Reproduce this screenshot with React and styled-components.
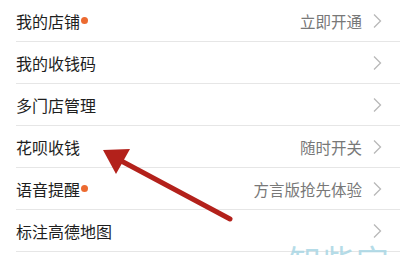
import React from "react";
import styled, { createGlobalStyle } from "styled-components";

const GlobalStyle = createGlobalStyle`
  html, body {
    margin: 0;
    padding: 0;
    background: #fff;
  }
  body {
    font-family: "Noto Sans CJK SC", "Noto Sans", sans-serif;
  }
`;

const ROWS = [
  { label: "我的店铺", dot: true, hint: "立即开通" },
  { label: "我的收钱码" },
  { label: "多门店管理" },
  { label: "花呗收钱", hint: "随时开关" },
  { label: "语音提醒", dot: true, hint: "方言版抢先体验" },
  { label: "标注高德地图" },
];

function Chevron() {
  return (
    <ChevronSvg viewBox="0 0 10 16" width="10" height="16">
      <path d="M2 1.5 L8.5 8 L2 14.5" fill="none" stroke="#b8b8b8" strokeWidth="1.3" />
    </ChevronSvg>
  );
}

function Arrow() {
  return (
    <ArrowSvg viewBox="0 0 400 255" width="400" height="255">
      <line x1="230" y1="219" x2="112" y2="156" stroke="#b3211b" strokeWidth="5" strokeLinecap="round" />
      <polygon points="103,150 130,149 116,174" fill="#b3211b" />
    </ArrowSvg>
  );
}

function App() {
  return (
    <Page>
      <GlobalStyle />
      <List>
        {ROWS.map((row) => (
          <Row key={row.label}>
            <Label>
              {row.label}
              {row.dot && <Dot />}
            </Label>
            <Right>
              {row.hint && <Hint>{row.hint}</Hint>}
              <Chevron />
            </Right>
          </Row>
        ))}
      </List>
      <Arrow />
      <Watermark>知些宝</Watermark>
    </Page>
  );
}

const Page = styled.div`
  position: relative;
  width: 400px;
  height: 255px;
  overflow: hidden;
  background: #fff;
`;

const List = styled.div`
  display: flex;
  flex-direction: column;
`;

const Row = styled.div`
  height: 41px;
  margin-left: 16px;
  padding-right: 18px;
  border-bottom: 1px solid #e6e6e6;
  display: flex;
  align-items: center;
  justify-content: space-between;
`;

const Label = styled.div`
  display: flex;
  align-items: center;
  font-size: 16px;
  color: #1e1e1e;
`;

const Dot = styled.span`
  width: 7px;
  height: 7px;
  border-radius: 50%;
  background: #ec6a30;
  margin-left: 1px;
`;

const Right = styled.div`
  display: flex;
  align-items: center;
  gap: 10px;
`;

const Hint = styled.span`
  font-size: 15.5px;
  color: #787878;
`;

const ChevronSvg = styled.svg`
  display: block;
`;

const ArrowSvg = styled.svg`
  position: absolute;
  top: 0;
  left: 0;
  pointer-events: none;
`;

const Watermark = styled.div`
  position: absolute;
  left: 288px;
  top: 236px;
  font-size: 33px;
  letter-spacing: 1px;
  color: #a9d6e4;
  opacity: 0.85;
`;

export default App;
